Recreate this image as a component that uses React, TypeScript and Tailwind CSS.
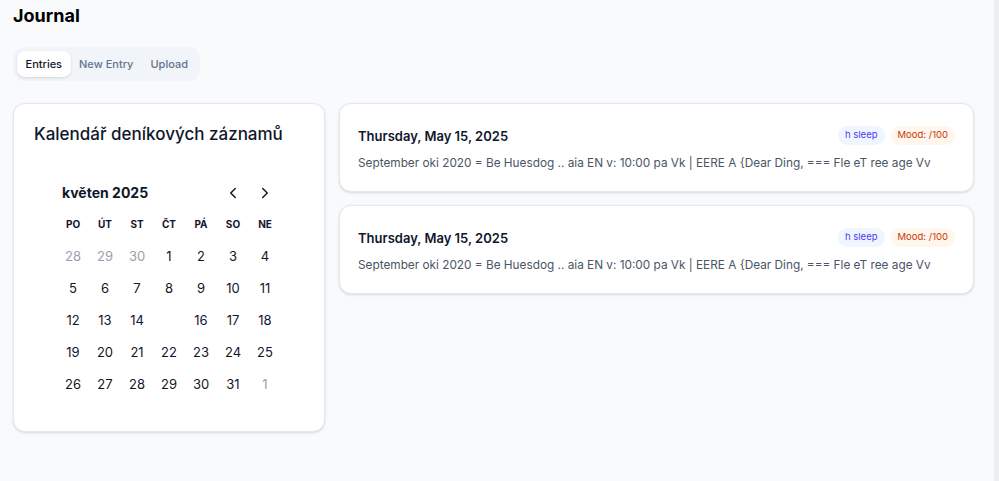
import { ChevronLeft, ChevronRight } from "lucide-react";

const weekDays = ["PO", "ÚT", "ST", "ČT", "PÁ", "SO", "NE"];

// null = blank cell (selected day drawn without a fill)
const weeks: { d: number | null; muted?: boolean }[][] = [
  [{ d: 28, muted: true }, { d: 29, muted: true }, { d: 30, muted: true }, { d: 1 }, { d: 2 }, { d: 3 }, { d: 4 }],
  [{ d: 5 }, { d: 6 }, { d: 7 }, { d: 8 }, { d: 9 }, { d: 10 }, { d: 11 }],
  [{ d: 12 }, { d: 13 }, { d: 14 }, { d: null }, { d: 16 }, { d: 17 }, { d: 18 }],
  [{ d: 19 }, { d: 20 }, { d: 21 }, { d: 22 }, { d: 23 }, { d: 24 }, { d: 25 }],
  [{ d: 26 }, { d: 27 }, { d: 28 }, { d: 29 }, { d: 30 }, { d: 31 }, { d: 1, muted: true }],
];

const entries = [
  {
    date: "Thursday, May 15, 2025",
    text: "September oki 2020 = Be Huesdog .. aia EN v: 10:00 pa Vk | EERE A {Dear Ding, === Fle eT ree age Vv",
  },
  {
    date: "Thursday, May 15, 2025",
    text: "September oki 2020 = Be Huesdog .. aia EN v: 10:00 pa Vk | EERE A {Dear Ding, === Fle eT ree age Vv",
  },
];

const Calendar = () => {
  return (
    <div className="rounded-xl border border-slate-200 bg-white shadow-sm pt-[14px] pb-[30px]">
      <h2 className="px-5 text-[17px] font-medium text-slate-900 leading-[32px]">Kalendář deníkových záznamů</h2>
      <div className="mx-auto w-[224px] mt-[27px]">
        <div className="flex items-center justify-between h-[32px]">
          <span className="pl-[5px] text-[14px] font-bold text-slate-900">květen 2025</span>
          <div className="flex">
            <button className="w-[32px] h-[32px] flex items-center justify-center text-slate-900">
              <ChevronLeft className="w-[18px] h-[18px]" strokeWidth={2} />
            </button>
            <button className="w-[32px] h-[32px] flex items-center justify-center text-slate-900">
              <ChevronRight className="w-[18px] h-[18px]" strokeWidth={2} />
            </button>
          </div>
        </div>
        <div className="grid grid-cols-7">
          {weekDays.map((w) => (
            <div key={w} className="h-[32px] flex items-center justify-center text-[10px] font-bold text-slate-900">
              {w}
            </div>
          ))}
        </div>
        {weeks.map((row, i) => (
          <div key={i} className="grid grid-cols-7">
            {row.map((c, j) => (
              <div
                key={j}
                className={`h-[32px] flex items-center justify-center text-[13px] ${c.muted ? "text-gray-400" : "text-slate-900"}`}
              >
                {c.d ?? ""}
              </div>
            ))}
          </div>
        ))}
      </div>
    </div>
  );
};

const EntryCard = ({ date, text }: { date: string; text: string }) => {
  return (
    <div className="rounded-xl border border-slate-200 bg-white shadow-sm px-[18px] pt-[21px] pb-[19px]">
      <div className="flex items-center justify-between">
        <h3 className="text-[13px] font-semibold text-slate-900 leading-[22px]">{date}</h3>
        <div className="flex gap-[6px]">
          <span className="rounded-full bg-blue-50 px-[7px] py-[2px] text-[9.5px] text-indigo-600">h sleep</span>
          <span className="rounded-full bg-orange-50 px-[7px] py-[2px] text-[9.5px] text-orange-700">Mood: /100</span>
        </div>
      </div>
      <p className="mt-[7px] text-[11.8px] text-gray-600 leading-[18px]">{text}</p>
    </div>
  );
};

const App = () => {
  return (
    <div className="flex min-h-[481px] bg-slate-50 font-['Inter',sans-serif]">
      <main className="flex-1 pl-[13px] pr-[20px] pt-[4px]">
        <h1 className="text-[18px] font-bold text-black leading-[24px]">Journal</h1>
        <div className="mt-[19px] inline-flex rounded-xl bg-slate-100 p-[4px]">
          <button className="rounded-lg bg-white px-[8.5px] pt-[5px] pb-[4px] text-[11px] font-medium text-slate-900 shadow-sm">Entries</button>
          <button className="px-[8.5px] pt-[5px] pb-[4px] text-[11px] font-medium text-slate-500">New Entry</button>
          <button className="px-[8.5px] pt-[5px] pb-[4px] text-[11px] font-medium text-slate-500">Upload</button>
        </div>
        <div className="mt-[22px] grid grid-cols-[312px_1fr] gap-[14px] items-start">
          <Calendar />
          <div className="flex flex-col gap-[13px]">
            {entries.map((e, i) => (
              <EntryCard key={i} date={e.date} text={e.text} />
            ))}
          </div>
        </div>
      </main>
      <div className="w-[5px] bg-[#eceef1]" />
    </div>
  );
};

export default App;
